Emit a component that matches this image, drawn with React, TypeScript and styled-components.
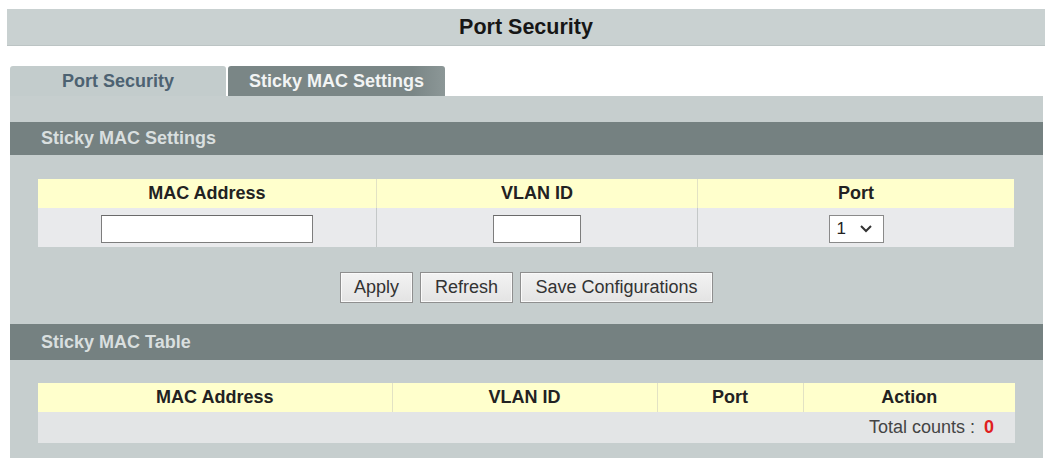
import React from "react";
import styled, { createGlobalStyle } from "styled-components";

const GlobalStyles = createGlobalStyle`
  *, *::before, *::after {
    box-sizing: border-box;
  }

  html, body {
    margin: 0;
    padding: 0;
    background: #ffffff;
  }

  body {
    font-family: "Liberation Sans", Arial, Helvetica, sans-serif;
    color: #222;
  }
`;

const settingsCols = [338, 321, 316];
const tableCols = [354, 265, 146, 212];

const App = () => {
  return (
    <Page>
      <GlobalStyles />
      <TitleBar>Port Security</TitleBar>

      <TabRow>
        <Tab>Port Security</Tab>
        <Tab $active>Sticky MAC Settings</Tab>
      </TabRow>

      <Panel>
        <SectionHeader>Sticky MAC Settings</SectionHeader>

        <TableWrap>
          <Grid>
            <colgroup>
              {settingsCols.map((w, i) => (
                <col key={i} style={{ width: w }} />
              ))}
            </colgroup>
            <thead>
              <tr>
                <HeadCell>MAC Address</HeadCell>
                <HeadCell>VLAN ID</HeadCell>
                <HeadCell>Port</HeadCell>
              </tr>
            </thead>
            <tbody>
              <tr>
                <BodyCell>
                  <TextInput $width={212} />
                </BodyCell>
                <BodyCell>
                  <TextInput $width={88} />
                </BodyCell>
                <BodyCell>
                  <SelectBox>
                    <Select defaultValue="1">
                      <option value="1">1</option>
                    </Select>
                    <svg width="14" height="10" viewBox="0 0 14 10">
                      <path d="M2 2 L7 7 L12 2" fill="none" stroke="#333" strokeWidth="2" />
                    </svg>
                  </SelectBox>
                </BodyCell>
              </tr>
            </tbody>
          </Grid>
        </TableWrap>

        <ButtonRow>
          <Button $width={73}>Apply</Button>
          <Button $width={93}>Refresh</Button>
          <Button $width={193}>Save Configurations</Button>
        </ButtonRow>

        <SectionHeader $tall>Sticky MAC Table</SectionHeader>

        <TableWrap $bottom>
          <Grid>
            <colgroup>
              {tableCols.map((w, i) => (
                <col key={i} style={{ width: w }} />
              ))}
            </colgroup>
            <thead>
              <tr>
                <HeadCell>MAC Address</HeadCell>
                <HeadCell>VLAN ID</HeadCell>
                <HeadCell>Port</HeadCell>
                <HeadCell>Action</HeadCell>
              </tr>
            </thead>
            <tbody>
              <tr>
                <TotalCell colSpan={4}>
                  Total counts : <Count>0</Count>
                </TotalCell>
              </tr>
            </tbody>
          </Grid>
        </TableWrap>
      </Panel>
    </Page>
  );
};

export default App;

const Page = styled.div`
  display: flex;
  flex-direction: column;
  padding: 9px 1px 0 7px;
  width: 1046px;
`;

const TitleBar = styled.div`
  height: 37px;
  display: flex;
  align-items: center;
  justify-content: center;
  background: #c9d1d1;
  border-bottom: 1px solid #bcc4c4;
  font-size: 21.5px;
  font-weight: bold;
  color: #161616;
`;

const TabRow = styled.div`
  display: flex;
  gap: 2px;
  margin: 20px 0 0 3px;
  height: 30px;
`;

const Tab = styled.div<{ $active?: boolean }>`
  width: ${(p) => (p.$active ? 217 : 216)}px;
  display: flex;
  align-items: center;
  justify-content: center;
  border-radius: 3px 3px 0 0;
  font-size: 18px;
  font-weight: bold;
  color: ${(p) => (p.$active ? "#f2f4f4" : "#4d6272")};
  background: ${(p) =>
    p.$active
      ? "linear-gradient(to right, #7a8686 0%, #7a8686 85%, #8c9797 100%)"
      : "#c3cccc"};
`;

const Panel = styled.div`
  margin-left: 3px;
  width: 1033px;
  background: #c6cece;
  padding-top: 26px;
  padding-bottom: 15px;
`;

const SectionHeader = styled.div<{ $tall?: boolean }>`
  height: ${(p) => (p.$tall ? 36 : 33)}px;
  display: flex;
  align-items: center;
  padding-left: 31px;
  background: #758181;
  font-size: 18px;
  font-weight: bold;
  color: #d9dfdf;
`;

const TableWrap = styled.div<{ $bottom?: boolean }>`
  padding: ${(p) => (p.$bottom ? "23px" : "24px")} 29px 0 28px;
`;

const Grid = styled.table`
  width: 100%;
  border-collapse: collapse;
  table-layout: fixed;
`;

const HeadCell = styled.th`
  height: 29px;
  padding: 0;
  background: #ffffcc;
  border-left: 1px solid #e2e2c4;
  font-size: 18px;
  font-weight: bold;
  color: #222;
  text-align: center;

  &:first-child {
    border-left: none;
  }
`;

const BodyCell = styled.td`
  height: 39px;
  padding: 0;
  background: #e9eaec;
  border-left: 1px solid #c4c8c8;
  text-align: center;
  vertical-align: middle;

  &:first-child {
    border-left: none;
  }
`;

const TextInput = styled.input.attrs({ type: "text" })<{ $width: number }>`
  width: ${(p) => p.$width}px;
  height: 28px;
  margin-top: 2px;
  border: 1px solid #7d7d7d;
  border-top-color: #6a6a6a;
  background: #ffffff;
  vertical-align: middle;
`;

const SelectBox = styled.span`
  display: inline-flex;
  align-items: center;
  gap: 8px;
  width: 55px;
  height: 28px;
  margin-top: 2px;
  padding: 0 6px 0 7px;
  border: 1px solid #8a8a8a;
  background: #ffffff;
  vertical-align: middle;
`;

const Select = styled.select`
  appearance: none;
  border: none;
  background: transparent;
  padding: 0;
  width: 14px;
  font-family: "Liberation Sans", Arial, sans-serif;
  font-size: 17px;
  color: #222;
  outline: none;
`;

const ButtonRow = styled.div`
  display: flex;
  justify-content: center;
  gap: 7px;
  margin-top: 25px;
  margin-bottom: 21px;
`;

const Button = styled.button<{ $width: number }>`
  width: ${(p) => p.$width}px;
  height: 31px;
  padding: 0;
  border: 1px solid #8f8f8f;
  box-shadow: inset 0 0 0 1px #fafafa;
  background: linear-gradient(#f3f3f3, #e3e3e3);
  font-family: "Liberation Sans", Arial, sans-serif;
  font-size: 18px;
  color: #333;
`;

const TotalCell = styled.td`
  height: 31px;
  padding: 0 21px 0 0;
  background: #e3e5e6;
  text-align: right;
  font-size: 18px;
  color: #444;
`;

const Count = styled.span`
  margin-left: 4px;
  font-weight: bold;
  color: #e0201e;
`;
